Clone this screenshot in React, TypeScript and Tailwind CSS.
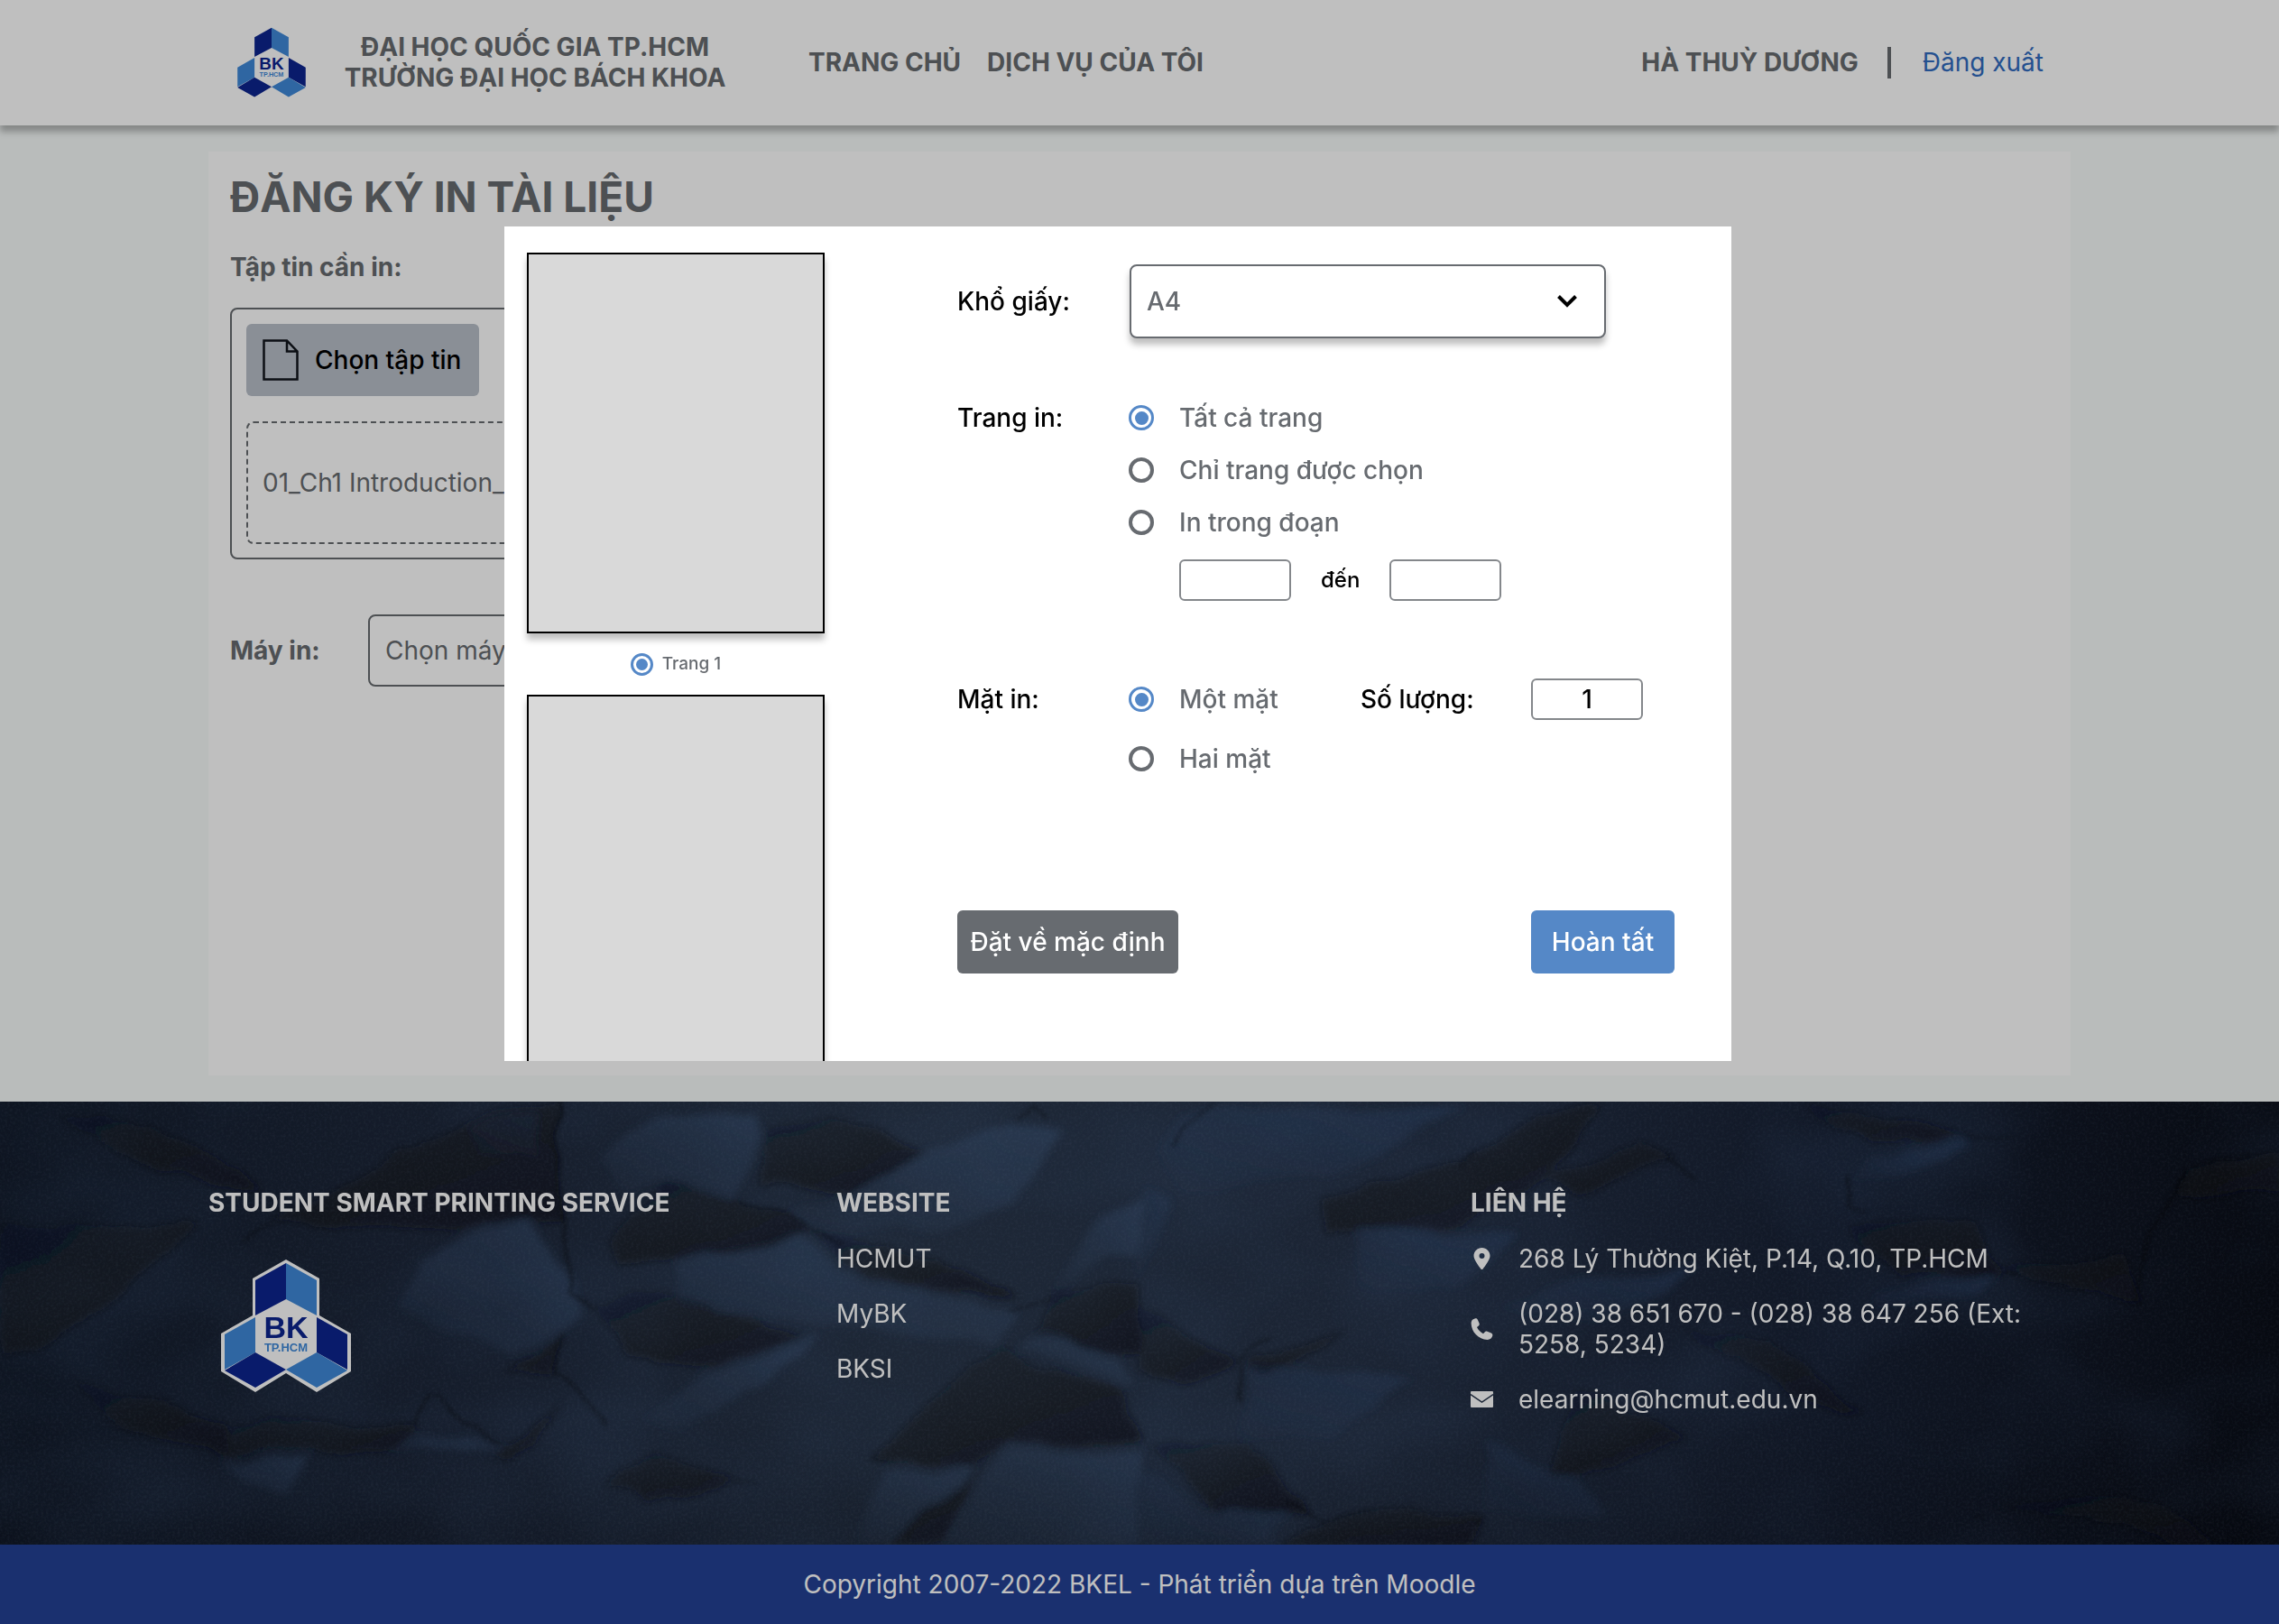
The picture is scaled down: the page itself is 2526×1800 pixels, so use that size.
import React from "react";
import { FaLocationDot } from "react-icons/fa6";

function Logo({ className }: { className: string }) {
  return (
    <svg viewBox="0 0 144 148" className={className} role="img" aria-label="BK TP.HCM">
      <path d="M72 1 109 22V63L144 83V125L106 148 72 127 38 148 0 125V83L35 63V22Z" fill="#fff" />
      <path d="M38 24 72 5V45L38 63Z" fill="#0c258f" />
      <path d="M72 5 106 24V63L72 45Z" fill="#3f89d9" />
      <path d="M38 65 4 84V123L38 104Z" fill="#3f89d9" />
      <path d="M4 124 38 104 72 123 38 143Z" fill="#0c258f" />
      <path d="M106 65 140 84V123L106 104Z" fill="#0c258f" />
      <path d="M72 123 106 104 140 124 106 143Z" fill="#3f89d9" />
      <text x="72" y="88" textAnchor="middle" fontFamily="Liberation Sans, sans-serif" fontWeight="700" fontSize="34" fill="#0c258f">
        BK
      </text>
      <text x="72" y="103" textAnchor="middle" fontFamily="Liberation Sans, sans-serif" fontWeight="700" fontSize="13" fill="#3f89d9">
        TP.HCM
      </text>
    </svg>
  );
}

const lightLeft = [
  "830,200 900,80 1040,60 1045,140 1010,330 920,270 850,340",
  "1270,180 1390,110 1460,110 1400,330 1300,440 1120,460 1095,400 1180,330",
  "1568,330 1500,440 1440,640 1500,560 1568,520",
  "1130,790 1060,940 920,1110 890,1080 960,930 1050,860",
  "580,520 640,470 720,420 790,600 810,720 780,790 700,860 600,770 550,680",
  "930,560 1090,460 1200,620 1400,720 1370,830 1130,760 940,700",
  "530,1200 580,1145 640,1130 685,1170 610,1175",
  "1390,1150 1568,1190 1568,1500 1300,1500 1340,1300",
  "1220,1240 1340,1240 1230,1490 1180,1490",
  "640,100 740,60 750,200 660,190",
  "300,1230 420,1200 400,1330",
  "1400,840 1568,960 1540,860 1440,780",
];

const darkLeft = [
  "380,410 640,90 770,20 775,400 640,440 520,430 370,430",
  "1050,130 1150,65 1270,190 1180,330 1050,300",
  "920,270 1010,340 1090,400 1120,460 1010,530 850,560 840,480",
  "310,1205 320,1110 400,1070 585,1110 540,1185 420,1165",
  "100,950 200,1000 310,1110 310,1205 170,1090",
  "668,1192 720,1150 775,1010 735,1180 700,1208",
  "1380,830 1420,900 1540,960 1568,1160 1390,1130 1340,1230 1195,1200 1330,920",
  "690,920 785,800 765,920 715,910",
  "1120,460 1290,540 1400,665 1300,650 1190,590",
  "830,1300 900,1190 1015,1275 900,1360",
  "820,690 880,650 960,690 1100,800 960,900 860,860",
  "1340,1240 1230,1500 1300,1500",
  "1440,640 1568,620 1568,850 1430,800",
  "0,420 120,440 280,420 130,700 60,850 0,880",
  "80,60 220,120 370,300 340,310 200,240",
];

const lightRight = [
  "130,50 450,40 300,240 60,320 20,200 60,60",
  "640,600 770,590 640,760 500,700",
  "480,1150 600,1270 640,1420 470,1380",
  "0,300 40,340 10,560 0,600",
  "160,900 380,950 260,1130 140,1120",
  "1000,200 1130,150 1140,180 980,300",
  "1010,650 1180,590 1150,660 1000,700",
  "300,440 520,460 440,640 300,640",
  "0,1240 90,1370 200,1390 180,1480 0,1490",
];

const darkRight = [
  "240,350 450,210 540,60 640,30 560,280 440,420 260,460",
  "560,280 690,150 745,190 700,230 600,320",
  "910,20 1130,130 1090,150 1000,145 950,90",
  "980,440 1150,400 1190,590 1040,600",
  "1180,570 1350,540 1380,680 1230,610",
  "0,700 140,890 60,960 0,900",
  "10,1180 150,1135 230,1390 110,1370",
  "250,1415 330,1365 460,1400 450,1500 190,1500",
  "1165,1350 1300,1330 1400,1370 1470,1490 1568,1500 1430,1500 1300,1390",
  "1440,250 1568,180 1568,320 1420,330",
  "740,760 860,820 1000,1050 900,1000",
  "600,980 760,1130 610,1260 560,1240",
  "150,890 290,770 180,940",
];

const creasesLeft =
  "M370 430 330 490M600 1010 575 1110M605 1010 680 1160M780 795 770 920M775 380 790 640 820 700M1010 340 1090 400 1120 460 1160 500M1385 715 1440 670M1195 1195 1230 1210M770 20 772 400M1400 90 1425 40 1440 80M770 920 830 1080M1015 1275 1040 1290";
const creasesRight =
  "M45 180 70 90 110 30M140 890 180 800M145 900 140 1000M200 1350 250 1415 320 1370M1130 130 1150 155 1200 140M970 270 975 370 1000 400M1190 580 1210 600M735 190 770 260M1440 250 1390 460 1370 680M1465 230 1530 185M470 180 440 230M460 1400 450 1430M1150 1380 1165 1400";

function Facets({ shapes, fill }: { shapes: string[]; fill: string }) {
  return (
    <>
      {shapes.map((points) => (
        <polygon key={points} points={points} fill={fill} />
      ))}
    </>
  );
}

/* Crumpled dark-blue paper behind the footer columns. */
function PaperTexture() {
  return (
    <svg viewBox="0 0 2526 491" preserveAspectRatio="none" className="absolute inset-0 h-full w-full" aria-hidden="true">
      <defs>
        <linearGradient id="paper-base">
          <stop offset="0" stopColor="#131c2c" />
          <stop offset="0.2" stopColor="#1d273a" />
          <stop offset="0.4" stopColor="#283549" />
          <stop offset="0.6" stopColor="#253146" />
          <stop offset="0.8" stopColor="#172033" />
          <stop offset="1" stopColor="#0a0e18" />
        </linearGradient>
        <linearGradient id="paper-foot" x1="0" y1="0" x2="0" y2="1">
          <stop offset="0.7" stopColor="#05070d" stopOpacity="0" />
          <stop offset="1" stopColor="#05070d" stopOpacity="0.2" />
        </linearGradient>
        <linearGradient id="fold-light" x1="1" y1="0" x2="0.1" y2="1">
          <stop offset="0" stopColor="#46658f" stopOpacity="0.42" />
          <stop offset="1" stopColor="#46658f" stopOpacity="0.08" />
        </linearGradient>
        <linearGradient id="fold-light-dim" x1="1" y1="0" x2="0.1" y2="1">
          <stop offset="0" stopColor="#365684" stopOpacity="0.38" />
          <stop offset="1" stopColor="#365684" stopOpacity="0.06" />
        </linearGradient>
        <linearGradient id="fold-dark" x1="0.9" y1="1" x2="0.1" y2="0">
          <stop offset="0" stopColor="#12131c" stopOpacity="0.7" />
          <stop offset="1" stopColor="#12131c" stopOpacity="0.2" />
        </linearGradient>
        <filter id="paper-soft" x="0" y="0" width="100%" height="100%">
          <feTurbulence type="fractalNoise" baseFrequency="0.012" numOctaves="4" seed="7" result="n" />
          <feDisplacementMap in="SourceGraphic" in2="n" scale="26" xChannelSelector="R" yChannelSelector="G" />
          <feGaussianBlur stdDeviation="4" />
        </filter>
        <filter id="paper-crease" x="0" y="0" width="100%" height="100%">
          <feTurbulence type="fractalNoise" baseFrequency="0.012" numOctaves="4" seed="7" result="n" />
          <feDisplacementMap in="SourceGraphic" in2="n" scale="26" xChannelSelector="R" yChannelSelector="G" />
          <feGaussianBlur stdDeviation="2" />
        </filter>
        <filter id="paper-wrinkle" x="0" y="0" width="100%" height="100%" colorInterpolationFilters="sRGB">
          <feTurbulence type="fractalNoise" baseFrequency="0.004 0.006" numOctaves="3" seed="23" />
          <feColorMatrix values="0 0 0 0 0.27  0 0 0 0 0.38  0 0 0 0 0.54  2 0 0 0 -0.85" />
        </filter>
        <filter id="paper-grain" x="0" y="0" width="100%" height="100%">
          <feTurbulence type="fractalNoise" baseFrequency="0.35" numOctaves="3" seed="4" />
          <feColorMatrix values="0 0 0 0 0.45  0 0 0 0 0.58  0 0 0 0 0.8  0.5 0 0 0 -0.2" />
        </filter>
      </defs>
      <rect width="2526" height="491" fill="url(#paper-base)" />
      <rect width="2526" height="491" filter="url(#paper-wrinkle)" opacity="0.25" />
      <g filter="url(#paper-soft)">
        <g transform="translate(0 -6) scale(0.8055 0.3333)">
          <Facets shapes={lightLeft} fill="url(#fold-light)" />
          <Facets shapes={darkLeft} fill="url(#fold-dark)" />
        </g>
        <g transform="translate(1263 -6) scale(0.8055 0.3333)">
          <Facets shapes={lightRight} fill="url(#fold-light-dim)" />
          <Facets shapes={darkRight} fill="url(#fold-dark)" />
        </g>
      </g>
      <g filter="url(#paper-crease)" fill="none" stroke="#06080f" strokeOpacity="0.35" strokeWidth="5">
        <path transform="translate(0 -6) scale(0.8055 0.3333)" d={creasesLeft} />
        <path transform="translate(1263 -6) scale(0.8055 0.3333)" d={creasesRight} />
      </g>
      <rect width="2526" height="491" fill="url(#paper-foot)" />
      <rect width="2526" height="491" filter="url(#paper-grain)" opacity="0.3" />
    </svg>
  );
}

function Radio({ id, name, label, checked = false, small = false }: { id: string; name: string; label: string; checked?: boolean; small?: boolean }) {
  return (
    <div className={small ? "flex items-center gap-2.5" : "flex items-center gap-7"}>
      <input
        type="radio"
        id={id}
        name={name}
        defaultChecked={checked}
        className={
          (small ? "size-[25px] before:size-[13px] " : "size-7 before:size-[15px] ") +
          "grid shrink-0 appearance-none place-content-center rounded-full border-4 border-[#676b70] before:rounded-full before:content-[''] checked:border-3 checked:border-[#5588c7] checked:before:bg-[#5588c7]"
        }
      />
      <label htmlFor={id} className={small ? "text-[19px] leading-6 text-[#676b70]" : "text-[#676b70]"}>
        {label}
      </label>
    </div>
  );
}

function Sheet() {
  return <div className="h-[422px] w-full shrink-0 border-2 border-black bg-[#d9d9d9] shadow-[0_7px_7px_rgba(0,0,0,0.25)]" />;
}

const numberBox = "h-[46px] w-[124px] rounded-md border-2 border-[#84878b] bg-white text-center text-black";

function PrintDialog() {
  return (
    <div role="dialog" aria-modal="true" aria-label="Tùy chọn in" className="mt-[251px] flex h-[925px] w-full max-w-[1360px] justify-between overflow-hidden bg-white pr-[63px] pl-[25px] text-[28px] leading-[34px] font-medium text-black">
      <div className="flex w-[330px] flex-col items-center pt-[29px]">
        <Sheet />
        <div className="flex h-[68px] shrink-0 items-center">
          <Radio id="page-1" name="page" label="Trang 1" checked small />
        </div>
        <Sheet />
      </div>
      <form className="w-[795px] pt-[42px]" onSubmit={(e) => e.preventDefault()}>
        <div className="flex items-center">
          <label htmlFor="paper-size" className="w-[191px]">Khổ giấy:</label>
          <div className="relative w-[528px]">
            <select id="paper-size" className="h-[82px] w-full appearance-none rounded-lg border-2 border-[#676b70] bg-white px-[17px] text-[#676b70] shadow-[0_7px_7px_rgba(0,0,0,0.25)]">
              <option>A4</option>
            </select>
            <svg viewBox="0 0 22 14" className="pointer-events-none absolute top-[34px] right-8 h-3.5 w-[22px]" fill="none" stroke="#000" strokeWidth="4" aria-hidden="true">
              <path d="M1.5 1.5 11 11 20.5 1.5" />
            </svg>
          </div>
        </div>

        <fieldset className="mt-[71px] flex">
          <legend className="float-left w-[190px]">Trang in:</legend>
          <div className="flex flex-col gap-6">
            <Radio id="all" name="range" label="Tất cả trang" checked />
            <Radio id="selected" name="range" label="Chỉ trang được chọn" />
            <Radio id="between" name="range" label="In trong đoạn" />
            <div className="flex items-center gap-[33px] pl-14">
              <input type="text" aria-label="Từ trang" className={numberBox} />
              <span className="text-[24px]">đến</span>
              <input type="text" aria-label="Đến trang" className={numberBox} />
            </div>
          </div>
        </fieldset>

        <div className="mt-[86px] flex items-start">
          <fieldset className="flex w-[447px] pt-1.5">
            <legend className="float-left w-[190px]">Mặt in:</legend>
            <div className="flex flex-col gap-8">
              <Radio id="one-side" name="side" label="Một mặt" checked />
              <Radio id="two-sides" name="side" label="Hai mặt" />
            </div>
          </fieldset>
          <div className="flex items-center">
            <label htmlFor="copies" className="w-[189px]">Số lượng:</label>
            <input id="copies" type="text" defaultValue="1" className={numberBox} />
          </div>
        </div>

        <div className="mt-[151px] flex justify-between text-white">
          <button type="reset" className="h-[70px] w-[245px] rounded-md bg-[#676b70]">Đặt về mặc định</button>
          <button type="submit" className="h-[70px] w-[159px] rounded-md bg-[#5588c7]">Hoàn tất</button>
        </div>
      </form>
    </div>
  );
}

function Header() {
  return (
    <header className="relative bg-white shadow-[0_7px_7px_rgba(0,0,0,0.28)]">
      <div className="mx-auto flex h-[139px] max-w-[2064px] items-center px-[30px] pb-px font-bold">
        <Logo className="w-20" />
        <p className="ml-[38px] w-[428px] text-center whitespace-nowrap">
          ĐẠI HỌC QUỐC GIA TP.HCM
          <br />
          TRƯỜNG ĐẠI HỌC BÁCH KHOA
        </p>
        <nav className="ml-[89px] flex gap-[29px]">
          <a href="#home">TRANG CHỦ</a>
          <a href="#services">DỊCH VỤ CỦA TÔI</a>
        </nav>
        <div className="ml-auto flex items-center">
          <span>HÀ THUỲ DƯƠNG</span>
          <span className="mr-[35px] ml-8 h-[35px] w-1 bg-[#676b6f]" />
          <a href="#logout" className="font-normal text-[#306bbf]">Đăng xuất</a>
        </div>
      </div>
    </header>
  );
}

function Footer() {
  return (
    <footer className="text-white">
      <div className="relative">
        <PaperTexture />
        <div className="relative mx-auto grid h-[491px] max-w-[2064px] grid-cols-[696fr_703fr_665fr] pt-[95px]">
          <section>
            <h2 className="font-bold">STUDENT SMART PRINTING SERVICE</h2>
            <Logo className="mt-[45px] ml-3.5 w-36" />
          </section>
          <section>
            <h2 className="font-bold">WEBSITE</h2>
            <ul className="mt-7 flex flex-col gap-[27px]">
              <li><a href="#hcmut">HCMUT</a></li>
              <li><a href="#mybk">MyBK</a></li>
              <li><a href="#bksi">BKSI</a></li>
            </ul>
          </section>
          <section>
            <h2 className="font-bold">LIÊN HỆ</h2>
            <ul className="mt-7 flex flex-col gap-[27px]">
              <li className="flex items-center gap-7">
                <FaLocationDot className="h-6 w-[25px] shrink-0" />
                <span>268 Lý Thường Kiệt, P.14, Q.10, TP.HCM</span>
              </li>
              <li className="flex items-center gap-7">
                <svg viewBox="0 0 25 24" className="w-[25px] shrink-0" fill="currentColor" aria-hidden="true">
                  <path d="M4.6.5C6 0 7.2.4 7.8 1.7L9.5 5.4C10 6.6 9.8 7.6 8.9 8.4L7 10C8.4 13 10.8 15.6 14 17.2L15.6 15.4C16.4 14.5 17.4 14.3 18.5 14.8L22.8 16.6C24 17.2 24.6 18.2 24.3 19.6 23.6 22.4 21.6 24 18.6 24 8.6 23.4 1 15.6.6 5.8.6 3 2 1.2 4.6.5Z" />
                </svg>
                <span className="w-[600px]">(028) 38 651 670 - (028) 38 647 256 (Ext: 5258, 5234)</span>
              </li>
              <li className="flex items-center gap-7">
                <svg viewBox="0 0 25 18" className="w-[25px] shrink-0" aria-hidden="true">
                  <rect width="25" height="18" rx="1" fill="#fff" />
                  <path d="M0 3.5 12.5 12 25 3.5" fill="none" stroke="#26334a" strokeWidth="1.5" />
                </svg>
                <a href="mailto:elearning@hcmut.edu.vn">elearning@hcmut.edu.vn</a>
              </li>
            </ul>
          </section>
        </div>
      </div>
      <p className="bg-[#234194] py-[27px] text-center">Copyright 2007-2022 BKEL - Phát triển dựa trên Moodle</p>
    </footer>
  );
}

export default function App() {
  return (
    <div className="relative font-['Inter',sans-serif] text-[28px] leading-[34px] text-[#676b6f]">
      <Header />
      <main className="bg-[#f7fbfa] px-4 py-[29px]">
        <section className="mx-auto min-h-[1024px] max-w-[2064px] bg-white px-6 pt-[22px]">
          <h1 className="text-[46px] leading-[56px] font-bold">ĐĂNG KÝ IN TÀI LIỆU</h1>
          <h2 className="mt-[33px] font-bold">Tập tin cần in:</h2>
          <div className="mt-7 max-w-[1200px] rounded-lg border-2 border-[#676b6f] px-4 pt-4 pb-[15px]">
            <button type="button" className="flex h-20 items-center gap-[18px] rounded-md bg-[#b8bfc9] pr-5 pl-[18px] font-medium text-black">
              <svg viewBox="0 0 40 46" className="h-[46px] w-10" fill="none" stroke="#10151b" strokeWidth="2.5" aria-hidden="true">
                <path d="M1.5 1.5H27L38.5 13.5V44.5H1.5ZM27 1.5V13.5H38.5" />
              </svg>
              Chọn tập tin
            </button>
            <div className="mt-7 flex h-[136px] items-center rounded-lg border-2 border-dashed border-[#676b6f] px-4">
              01_Ch1 Introduction_2022.pdf
            </div>
          </div>
          <div className="mt-[61px] flex items-center">
            <label htmlFor="printer" className="w-[153px] font-bold">Máy in:</label>
            <select id="printer" className="h-20 w-[620px] appearance-none rounded-lg border-2 border-[#676b6f] px-[17px]">
              <option>Chọn máy in</option>
            </select>
          </div>
        </section>
      </main>
      <Footer />
      <div className="absolute inset-0 flex items-start justify-center bg-black/25 pr-12">
        <PrintDialog />
      </div>
    </div>
  );
}
